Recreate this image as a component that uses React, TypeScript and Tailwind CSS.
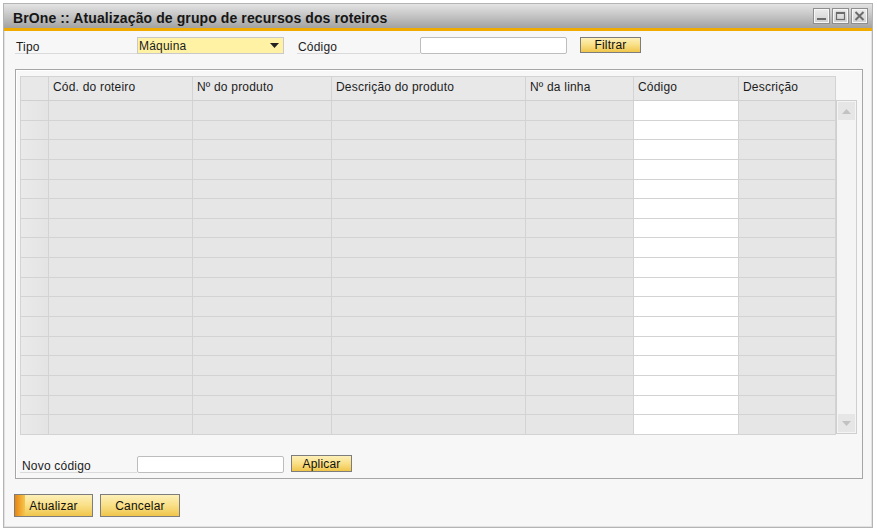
const COLS = [
  { label: "Cód. do roteiro", w: "w-[144px]", white: false },
  { label: "Nº do produto", w: "w-[139px]", white: false },
  { label: "Descrição do produto", w: "w-[194px]", white: false },
  { label: "Nº da linha", w: "w-[108px]", white: false },
  { label: "Código", w: "w-[105px]", white: true },
  { label: "Descrição", w: "w-[97px]", white: false },
];

const ROWS = Array.from({ length: 17 }, (_, i) => i);

function GoldButton({ label, w, primary = false }: { label: string; w: string; primary?: boolean }) {
  return (
    <button
      className={`relative flex h-full ${w} items-center justify-center overflow-hidden border border-[#7d7d7d] bg-gradient-to-b from-[#fdf0b8] via-[#f9df85] to-[#f0c649] text-[#111]`}
    >
      {primary && (
        <span className="absolute inset-y-0 left-0 w-[10px] bg-gradient-to-r from-[#e8850c] to-[#f6c64a]" />
      )}
      <span className="relative">{label}</span>
    </button>
  );
}

function WinButton({ kind }: { kind: "min" | "max" | "close" }) {
  return (
    <div className="flex h-[16px] w-[17px] items-center justify-center border border-[#8e8e8e] bg-gradient-to-b from-[#ececec] to-[#cfcfcf] shadow-[inset_0_0_0_1px_#f6f6f6]">
      <svg width="11" height="10" viewBox="0 0 11 10">
        {kind === "min" && <rect x="1" y="7" width="9" height="2" fill="#6b6b6b" />}
        {kind === "max" && (
          <rect x="1.5" y="1.5" width="8" height="7" fill="none" stroke="#6b6b6b" strokeWidth="1.2" />
        )}
        {kind === "max" && <rect x="1" y="1" width="9" height="2" fill="#6b6b6b" />}
        {kind === "close" && (
          <path d="M1.5 1 L9.5 9 M9.5 1 L1.5 9" stroke="#6b6b6b" strokeWidth="2" />
        )}
      </svg>
    </div>
  );
}

function Label({ text, w }: { text: string; w: string }) {
  return (
    <div className={`flex h-full ${w} items-center border-b border-[#dadada] pl-[1px] pt-[3px]`}>
      {text}
    </div>
  );
}

export default function App() {
  return (
    <div
      className="h-[532px] w-[877px] bg-white p-[3px] text-[12px] tracking-[0.2px] text-[#1c1c1c]"
      style={{ fontFamily: '"Liberation Sans", Arial, sans-serif' }}
    >
      <div className="flex h-[525px] w-[870px] flex-col border border-[#b4b4b4] bg-[#f7f7f7] shadow-[inset_0_0_0_1px_#e2e2e2]">
        {/* title bar */}
        <div className="flex h-[24px] items-center justify-between bg-gradient-to-b from-[#e4e4e4] via-[#c4c4c4] to-[#a2a2a2] pl-[9px] pr-[4px]">
          <span className="pt-[5px] text-[14px] font-bold tracking-[0.1px] text-[#161616]">
            BrOne :: Atualização de grupo de recursos dos roteiros
          </span>
          <div className="flex gap-[2px]">
            <WinButton kind="min" />
            <WinButton kind="max" />
            <WinButton kind="close" />
          </div>
        </div>
        <div className="h-[3px] bg-[#f0ab00]" />

        {/* filter row */}
        <div className="ml-[11px] mt-[6px] flex h-[17px] items-stretch">
          <Label text="Tipo" w="w-[122px]" />
          <div className="flex w-[147px] items-center justify-between border border-[#c9c9c9] bg-[#fff2a4] pl-[1px] pr-[4px]">
            <span>Máquina</span>
            <svg width="9" height="5" viewBox="0 0 9 5">
              <path d="M0 0 H9 L4.5 5 Z" fill="#222" />
            </svg>
          </div>
          <div className="ml-[13px]">
            <Label text="Código" w="w-[123px]" />
          </div>
          <div className="w-[147px] rounded-[2px] border border-[#bdbdbd] bg-white" />
          <div className="ml-[13px] h-[16px]">
            <GoldButton label="Filtrar" w="w-[61px]" />
          </div>
        </div>

        {/* group frame */}
        <div className="ml-[11px] mt-[15px] flex h-[410px] w-[848px] flex-col border border-[#a6a6a6] pl-[4px] pt-[6px] shadow-[inset_1px_1px_0_#ffffff]">
          <div className="flex">
            <div className="flex w-[816px] flex-col border-l border-t border-[#d3d3d3]">
              {/* header */}
              <div className="flex h-[24px] border-b border-[#d0d0d0] bg-[#e8e8e8]">
                <div className="w-[28px] border-r border-[#d3d3d3]" />
                {COLS.map((c) => (
                  <div key={c.label} className={`${c.w} border-r border-[#d3d3d3] pl-[4px] pt-[1px]`}>
                    {c.label}
                  </div>
                ))}
              </div>
              {/* body */}
              <div className="flex h-[334px] flex-col">
                {ROWS.map((r) => (
                  <div key={r} className="flex flex-1 border-b border-[#d3d3d3]">
                    <div className="w-[28px] border-r border-[#d3d3d3] bg-gradient-to-r from-[#eaeaea] to-[#e4e4e4]" />
                    {COLS.map((c) => (
                      <div
                        key={c.label}
                        className={`${c.w} border-r border-[#d3d3d3] ${c.white ? "bg-white" : "bg-[#e6e6e6]"}`}
                      />
                    ))}
                  </div>
                ))}
              </div>
            </div>
            {/* scrollbar */}
            <div className="mt-[24px] flex h-[334px] w-[21px] flex-col justify-between border border-[#cfcfcf] bg-[#f4f4f4] p-[1px]">
              <div className="flex h-[18px] items-center justify-center bg-[#e6e6e6]">
                <svg width="9" height="5" viewBox="0 0 9 5">
                  <path d="M0 5 H9 L4.5 0 Z" fill="#c2c2c2" />
                </svg>
              </div>
              <div className="flex h-[18px] items-center justify-center bg-[#e6e6e6]">
                <svg width="9" height="5" viewBox="0 0 9 5">
                  <path d="M0 0 H9 L4.5 5 Z" fill="#c2c2c2" />
                </svg>
              </div>
            </div>
          </div>

          {/* novo código */}
          <div className="mt-[21px] flex h-[17px] items-stretch">
            <div className="flex w-[117px] items-center border-b border-[#dadada] pl-[2px] pt-[3px]">
              Novo código
            </div>
            <div className="w-[147px] rounded-[2px] border border-[#bdbdbd] bg-white" />
            <div className="ml-[7px] -mt-[1px] h-[17px]">
              <GoldButton label="Aplicar" w="w-[61px]" />
            </div>
          </div>
        </div>

        {/* bottom buttons */}
        <div className="ml-[10px] mt-[15px] flex h-[23px] gap-[7px]">
          <GoldButton label="Atualizar" w="w-[79px]" primary />
          <GoldButton label="Cancelar" w="w-[80px]" />
        </div>
      </div>
    </div>
  );
}
